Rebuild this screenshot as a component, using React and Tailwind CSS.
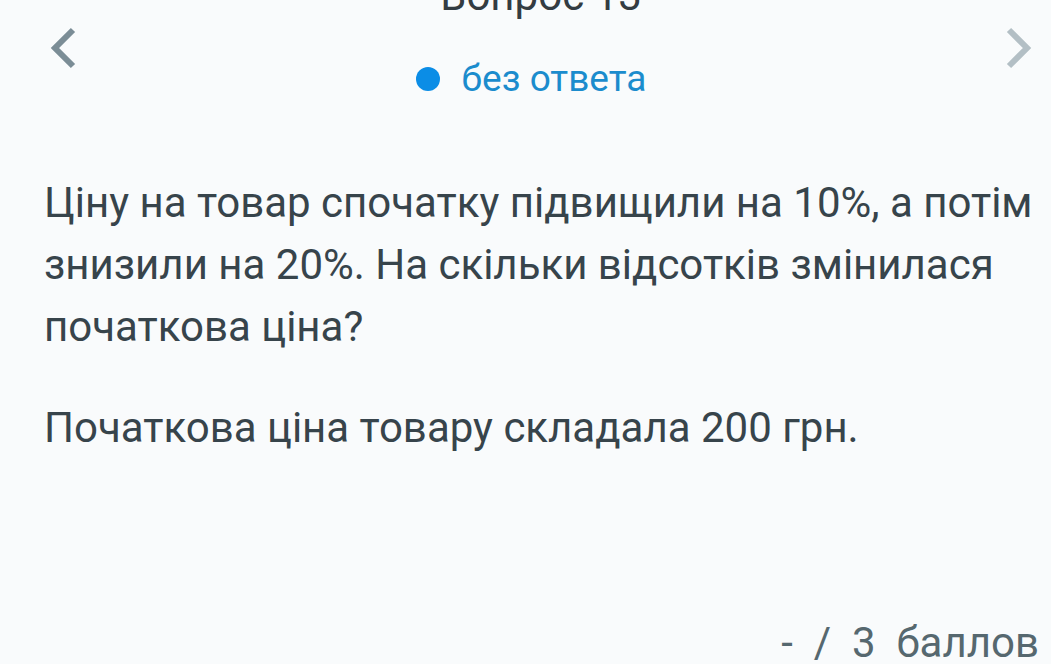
function Chevron({ dir, color }) {
  return (
    <svg width="34" height="44" viewBox="0 0 34 44" className="mt-[26px] shrink-0">
      <path
        d={dir === "left" ? "M27 4 L9 22 L27 40" : "M7 4 L25 22 L7 40"}
        fill="none"
        stroke={color}
        strokeWidth="6"
      />
    </svg>
  );
}

export default function App() {
  return (
    <div
      className="w-[1051px] h-[664px] overflow-hidden bg-[#f9fbfc] flex flex-col"
      style={{ fontFamily: 'Roboto, "Noto Sans", sans-serif' }}
    >
      <header className="h-[130px] shrink-0 flex items-start pl-[46px] pr-[15px]">
        <Chevron dir="left" color="#7b8d96" />
        <div className="flex-1 flex flex-col items-center">
          <div className="-mt-[26px] text-[42px] leading-[44px] text-[#333c42]">Вопрос 13</div>
          <div className="mt-[41px] h-[40px] flex items-center gap-[22px] pr-[20px]">
            <span className="w-[24px] h-[24px] rounded-full bg-[#0b8de6]" />
            <span className="text-[37px] leading-[40px] text-[#1b8ccd]">без ответа</span>
          </div>
        </div>
        <Chevron dir="right" color="#b3bfc5" />
      </header>
      <main className="flex-1 pl-[44px] pr-[14px] pt-[42px] text-[42px] leading-[62px] text-[#37444b]">
        <p>Ціну на товар спочатку підвищили на 10%, а потім знизили на 20%. На скільки відсотків змінилася початкова ціна?</p>
        <p className="mt-[39px]">Початкова ціна товару складала 200 грн.</p>
      </main>
      <footer className="h-[46px] shrink-0 flex justify-end pr-[12px]">
        <span className="text-[42px] leading-[50px] text-[#56686f] whitespace-pre">-  /  3  баллов</span>
      </footer>
    </div>
  );
}
